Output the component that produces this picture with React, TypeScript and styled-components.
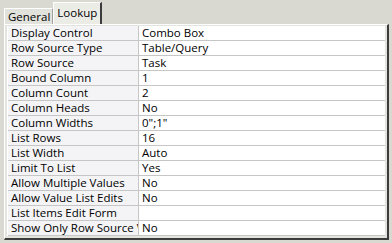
import React from "react";
import styled, { createGlobalStyle } from "styled-components";

const GlobalStyle = createGlobalStyle`
    body {
        margin: 0;
        background: #d9d9d2;
        font-family: "Open Sans", "Noto Sans", sans-serif;
    }
`

const Frame = styled.div`
    width: 392px;
    height: 243px;
    padding-top: 2px;
    box-sizing: border-box;
`

const TabStrip = styled.div`
    display: flex;
    align-items: flex-end;
    height: 22px;
    padding-left: 4px;
`

const Tab = styled.div<{ $active?: boolean }>`
    box-sizing: border-box;
    height: ${p => (p.$active ? 22 : 16)}px;
    padding: ${p => (p.$active ? "2px 3px 0 3px" : "0 2px 0 3px")};
    background: ${p => (p.$active ? "#ecece6" : "#e2e2dc")};
    border-top: 1px solid #ffffff;
    border-left: 1px solid #ffffff;
    border-right: ${p => (p.$active ? "2px solid #3c3c3c" : "1px solid #a0a0a0")};
    font-size: 11.5px;
    line-height: 15px;
    color: #000;
    white-space: nowrap;
`

const Panel = styled.div`
    box-sizing: border-box;
    width: 385px;
    height: 216px;
    margin-left: 4px;
    padding: 1px 2px 0 2px;
    background: #e4e4de;
    border-left: 1px solid #ffffff;
    border-top: 1px solid #ffffff;
    border-right: 2px solid #3c3c3c;
    border-bottom: 2px solid #3c3c3c;
`

const Grid = styled.div`
    display: grid;
    grid-template-columns: 131px 1fr;
    border-left: 1px solid #ffffff;
    background: #ffffff;
`

const Cell = styled.div<{ $label?: boolean }>`
    height: 14px;
    border-bottom: 1px solid #c6c6c6;
    border-right: ${p => (p.$label ? "1px solid #c6c6c6" : "none")};
    background: ${p => (p.$label ? "#f4f4f6" : "#ffffff")};
    padding-left: 3px;
    font-size: 11.5px;
    line-height: 14px;
    color: #000;
    white-space: nowrap;
    overflow: hidden;
    text-overflow: clip;
`

const rows: [string, string][] = [
    ["Display Control", "Combo Box"],
    ["Row Source Type", "Table/Query"],
    ["Row Source", "Task"],
    ["Bound Column", "1"],
    ["Column Count", "2"],
    ["Column Heads", "No"],
    ["Column Widths", "0\";1\""],
    ["List Rows", "16"],
    ["List Width", "Auto"],
    ["Limit To List", "Yes"],
    ["Allow Multiple Values", "No"],
    ["Allow Value List Edits", "No"],
    ["List Items Edit Form", ""],
    ["Show Only Row Source Values", "No"],
]

export default function App() {
    return (
        <>
            <GlobalStyle />
            <Frame>
                <TabStrip>
                    <Tab>General</Tab>
                    <Tab $active>Lookup</Tab>
                </TabStrip>
                <Panel>
                    <Grid>
                        {rows.map(([label, value]) => (
                            <React.Fragment key={label}>
                                <Cell $label>{label}</Cell>
                                <Cell>{value}</Cell>
                            </React.Fragment>
                        ))}
                    </Grid>
                </Panel>
            </Frame>
        </>
    )
}
